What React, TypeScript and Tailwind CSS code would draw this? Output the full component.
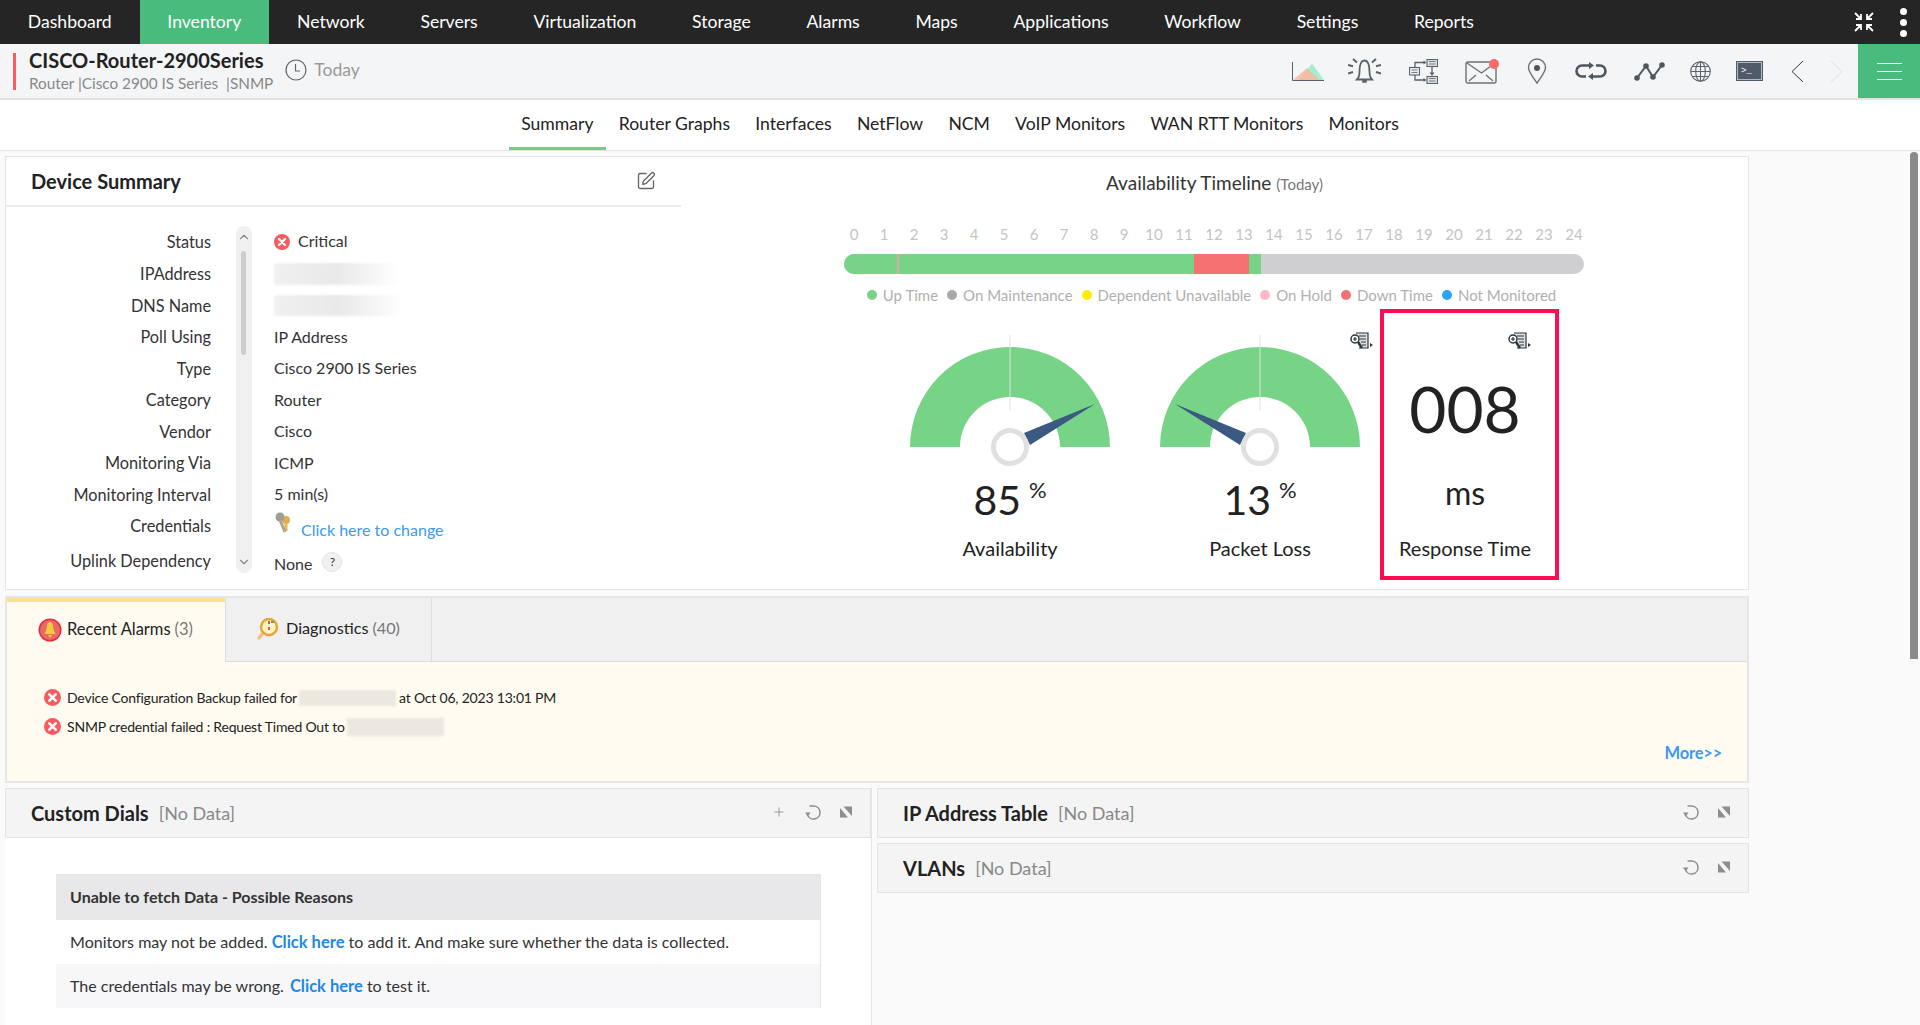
import React from 'react';
import { Plus, SquarePen, ChevronUp, ChevronDown } from 'lucide-react';

const navItems = ['Dashboard', 'Inventory', 'Network', 'Servers', 'Virtualization', 'Storage', 'Alarms', 'Maps', 'Applications', 'Workflow', 'Settings', 'Reports'];
const tabs = ['Summary', 'Router Graphs', 'Interfaces', 'NetFlow', 'NCM', 'VoIP Monitors', 'WAN RTT Monitors', 'Monitors'];
const hours = Array.from({ length: 25 }, (_, i) => i);

const legend = [
  { label: 'Up Time', dot: 'bg-[#77d385]' },
  { label: 'On Maintenance', dot: 'bg-[#aaaaaa]' },
  { label: 'Dependent Unavailable', dot: 'bg-[#ffec00]' },
  { label: 'On Hold', dot: 'bg-[#ffb9c8]' },
  { label: 'Down Time', dot: 'bg-[#f67272]' },
  { label: 'Not Monitored', dot: 'bg-[#2ba4f5]' },
];

const ErrorIcon = ({ size = 16 }: { size?: number }) => (
  <svg width={size} height={size} viewBox="0 0 16 16" className="shrink-0">
    <circle cx="8" cy="8" r="8" fill="#f65c5f" />
    <path d="M5 5l6 6M11 5l-6 6" stroke="#fff" strokeWidth="2.4" strokeLinecap="round" />
  </svg>
);

const CollapseIcon = () => (
  <svg width="12" height="12" viewBox="0 0 12 12" fill="#8b8d90">
    <path d="M0 2l8 9.500H0zM3.500 .5H12V10z" />
  </svg>
);

const RefreshIcon = () => (
  <svg width="16" height="17" viewBox="0 0 16 17" fill="none" stroke="#8b8d90" strokeWidth="1.500">
    <path d="M4.500 2H8.500a6.500 6.500 0 1 1-6 9" />
    <path d="M0 8.500h5.500L2.800 12.500z" fill="#8b8d90" stroke="none" />
  </svg>
);

const ReportIcon = () => (
  <svg width="23" height="18" viewBox="0 0 23 18" fill="none" stroke="#2c333a" strokeWidth="1.2">
    <path d="M6 1h12v15H9" fill="#dfe2e4" />
    <path d="M9 4h7M10 7h6M11 10h5M12 13h4" />
    <circle cx="5" cy="7" r="4" fill="#fff" strokeWidth="1.5" />
    <path d="M3 7h4M5 5v4" />
    <path d="M8 10l4 6" strokeWidth="2.4" />
    <path d="M20 11l3 2-3 2z" fill="#333" stroke="none" />
  </svg>
);

const Gauge = ({ value, label, needle }: { value: string; label: string; needle: string }) => (
  <div className="w-[250px] flex flex-col items-center">
    <svg width="250" height="143" viewBox="0 0 250 143" className="mt-[25px]">
      <path d="M25 113a100 100 0 0 1 200 0h-50a50 50 0 0 0-100 0z" fill="#77d385" />
      <path d="M125 1v75" stroke="#dfe3e0" strokeWidth="1" />
      <path d={needle} fill="#3b5a82" />
      <circle cx="125" cy="113" r="16.5" fill="#fff" stroke="#e0e0e0" strokeWidth="5" />
    </svg>
    <div className="-mt-[3px] h-[52px] flex items-start justify-center text-[#222]">
      <span className="text-[41px] leading-[52px]">{value}</span>
      <span className="text-[22px] leading-[20px] ml-[8px] mt-[6px]">%</span>
    </div>
    <div className="mt-[9px] text-[20px] leading-[26px] text-[#222]">{label}</div>
  </div>
);

const TopIcons = () => (
  <div className="flex items-center h-full">
    <svg width="32" height="20" viewBox="0 0 32 20">
      <path d="M7 19l13-16.500L32 19z" fill="#a4efcf" />
      <path d="M1 19L15 7l13 12z" fill="#f7b8a0" opacity=".85" />
      <path d="M.5 1v18.500H32" fill="none" stroke="#59626b" strokeWidth="1" />
    </svg>
    <svg width="33" height="27" viewBox="0 0 33 27" fill="none" stroke="#59626b" className="ml-[24px]">
      <path d="M9 21.500c2-2 2.500-4 2.500-8 0-4 .5-11 5-11s5 7 5 11c0 4 .5 6 2.500 8z" strokeWidth="1.800" />
      <path d="M15 22v2h3v-2" strokeWidth="1.500" fill="#59626b" />
      <path d="M5 1l4 3.500M28 1l-4 3.500M0 7l5 1.200M33 7l-5 1.200M0 15.500l5-1.500M33 15.500l-5-1.500" strokeWidth="2" />
    </svg>
    <svg width="29" height="25" viewBox="0 0 29 25" fill="none" stroke="#59626b" strokeWidth="1.100" className="ml-[28px]">
      <rect x="18" y=".5" width="10.500" height="7" fill="#dfe2e5" />
      <path d="M20 2.500h6.500M20 5h6.500" strokeWidth=".8" />
      <rect x="18" y="17.500" width="10.500" height="7" fill="#dfe2e5" />
      <path d="M20 19.500h6.500M20 22h6.500" strokeWidth=".8" />
      <rect x=".5" y="8.500" width="10" height="7.500" fill="#eceef0" />
      <path d="M2.500 11h6M2.500 13.500h6" strokeWidth=".8" />
      <path d="M6 8V3.500h9M6 16v5h9M23 8v6" strokeWidth="1.300" />
      <path d="M14.500 1.500l3 2-3 2zM14.500 19l3 2-3 2zM20.500 13.500h5L23 17z" fill="#59626b" stroke="none" />
    </svg>
    <div className="relative ml-[27px]">
      <svg width="33" height="25" viewBox="0 0 33 25" fill="none" stroke="#6b7278" strokeWidth="1.400">
        <rect x="1" y="3" width="30" height="21" rx="2" />
        <path d="M2 4l14.500 10L30 4M4 22l7-6M28 22l-7-6" />
      </svg>
      <span className="absolute right-[-1px] top-[0px] w-[10px] h-[10px] rounded-full bg-[#f96a6a]" />
    </div>
    <svg width="20" height="26" viewBox="0 0 20 26" fill="none" stroke="#6b7278" strokeWidth="1.400" className="ml-[29px]">
      <path d="M10 25C6 19 1.500 14 1.500 9.500a8.500 8.500 0 0 1 17 0C18.500 14 14 19 10 25z" />
      <circle cx="10" cy="10" r="3" fill="#4e565d" stroke="none" />
    </svg>
    <svg width="34" height="18" viewBox="0 0 34 18" fill="none" stroke="#4e565d" strokeWidth="2.600" className="ml-[27px]">
      <path d="M15 3.500H8a5.500 5.500 0 0 0 0 11h4M19 14.500h7a5.500 5.500 0 0 0 0-11h-4" />
      <path d="M15 0l5 3.500L15 7zM19 11l-5 3.500 5 3.500z" fill="#4e565d" stroke="none" />
    </svg>
    <svg width="31" height="19" viewBox="0 0 31 19" fill="#4e565d" stroke="#4e565d" strokeWidth="2" className="ml-[26px]">
      <path d="M3 16L12 4l7 11L28 3" fill="none" />
      <circle cx="3" cy="16" r="1.800" /><circle cx="12" cy="4" r="1.800" /><circle cx="19" cy="15" r="1.800" /><circle cx="28" cy="3" r="1.800" />
    </svg>
    <svg width="21" height="21" viewBox="0 0 21 21" fill="none" stroke="#5c646b" strokeWidth="1.100" className="ml-[25px]">
      <circle cx="10.500" cy="10.500" r="9.800" />
      <ellipse cx="10.500" cy="10.500" rx="4.800" ry="9.800" />
      <path d="M10.500 .7v19.600M.7 10.500h19.600M2 5.500h17M2 15.500h17" />
    </svg>
    <div className="ml-[25px] w-[27px] h-[20px] bg-[#4f5b6b] border border-[#4f5b6b]">
      <div className="w-full h-full border border-[#b4b9bf] flex items-center pl-[3px] text-[9px] leading-none text-white [font-family:'Liberation_Mono',monospace]">
        &gt;_
      </div>
    </div>
    <svg width="13" height="23" viewBox="0 0 13 23" fill="none" stroke="#333" strokeWidth="1" className="ml-[28px]">
      <path d="M12 1L1 11.500 12 22" />
    </svg>
    <svg width="13" height="23" viewBox="0 0 13 23" fill="none" stroke="#dcdee0" strokeWidth="1" className="ml-[26px]">
      <path d="M1 1l11 10.500L1 22" />
    </svg>
  </div>
);

const Row = ({ label, children, className = 'h-[31.5px]' }: { label: string; children: React.ReactNode; className?: string }) => (
  <div className={`flex items-center ${className}`}>
    <div className="w-[205px] pt-[1px] text-right text-[16.300px] text-[#333]">{label}</div>
    <div className="ml-[63px] flex items-center text-[16px] text-[#333]">{children}</div>
  </div>
);

const PanelHeader = ({ title, plus }: { title: string; plus?: boolean }) => (
  <div className="h-[50px] bg-[#f4f4f4] border border-[#e3e3e3] flex items-center pl-[25px] pr-[18px]">
    <span className="text-[20px] font-bold text-[#222]">{title}</span>
    <span className="ml-[10px] text-[18px] text-[#888]">[No Data]</span>
    <div className="ml-auto flex items-center gap-[19px] text-[#8b8d90] -mt-[2px]">
      {plus && <Plus size={14} strokeWidth={1.5} />}
      <RefreshIcon />
      <CollapseIcon />
    </div>
  </div>
);

export default function App() {
  return (
    <div className="h-screen overflow-hidden bg-[#fafafa] text-[#222] [font-family:Lato,sans-serif]">
      <nav className="h-[44px] bg-[#252525] flex items-center text-white">
        {navItems.map((item) => (
          <div key={item} className={`h-full flex items-center px-[27.850px] text-[17.600px] ${item === 'Inventory' ? 'bg-[#48bb7d]' : ''}`}>
            {item}
          </div>
        ))}
        <div className="ml-auto flex items-center pr-[13px] gap-[26px]">
          <svg width="20" height="20" viewBox="0 0 20 20" fill="none" stroke="#fff" strokeWidth="1.800">
            <path d="M1 1l6 6M7 2v5H2M19 1l-6 6M13 2v5h5M1 19l6-6M7 18v-5H2M19 19l-6-6M13 18v-5h5" />
          </svg>
          <div className="flex flex-col gap-[4px]">
            <span className="w-[7px] h-[7px] rounded-full bg-white" />
            <span className="w-[7px] h-[7px] rounded-full bg-white" />
            <span className="w-[7px] h-[7px] rounded-full bg-white" />
          </div>
        </div>
      </nav>

      <header className="h-[56px] bg-[#f4f5f7] border-b-2 border-[#e2e3e5] flex items-center">
        <div className="ml-[13px] w-[3px] h-[37px] bg-[#ff5a5f]" />
        <div className="ml-[13px] -mt-[2px]">
          <div className="text-[20px] leading-[26px] font-bold text-[#222]">CISCO-Router-2900Series</div>
          <div className="text-[15.300px] leading-[20px] text-[#888]">Router |Cisco 2900 IS Series &nbsp;|SNMP</div>
        </div>
        <svg width="22" height="22" viewBox="0 0 22 22" fill="none" stroke="#666" strokeWidth="1.200" className="ml-[12px] -mt-[2px]">
          <circle cx="11" cy="11" r="10" />
          <path d="M10.500 5v7H15" />
        </svg>
        <span className="ml-[7px] -mt-[2px] text-[17.500px] text-[#999]">Today</span>
        <div className="ml-auto h-full flex items-center">
          <TopIcons />
          <div className="ml-[15px] w-[62px] h-full bg-[#48bb7d] flex flex-col items-center justify-center gap-[7px]">
            <span className="w-[25px] h-px bg-white" />
            <span className="w-[25px] h-px bg-white" />
            <span className="w-[25px] h-px bg-white" />
          </div>
        </div>
      </header>

      <div className="h-[51px] bg-white border-b border-[#e5e5e5] flex justify-center">
        {tabs.map((tab) => (
          <div key={tab} className={`h-[50px] flex items-center px-[12.600px] pt-[2px] text-[17.600px] text-[#222] border-b-[3px] ${tab === 'Summary' ? 'border-[#6fcf86]' : 'border-transparent'}`}>
            {tab}
          </div>
        ))}
      </div>

      <div className="relative pl-[5px] pt-[5px] w-[1749px]">
        <section className="h-[434px] bg-white border border-[#e5e5e5] flex">
          <div className="w-[675px] shrink-0">
            <div className="h-[50px] border-b-2 border-[#ececec] flex items-center pl-[25px] pr-[25px]">
              <span className="text-[20px] font-bold text-[#222]">Device Summary</span>
              <SquarePen size={20} strokeWidth={1.6} className="ml-auto text-[#666]" />
            </div>
            <div className="relative pt-[18px]">
              <div className="absolute left-[230px] top-[19px] w-[16px] h-[347px] rounded-full bg-[#f0f0f0] flex flex-col items-center justify-between py-[4px] text-[#888]">
                <ChevronUp size={14} strokeWidth={2} />
                <ChevronDown size={14} strokeWidth={2} />
                <span className="absolute left-[5px] top-[25px] w-[5px] h-[104px] rounded-full bg-[#cdcdcd]" />
              </div>
              <Row label="Status" className="h-[33px]">
                <ErrorIcon />
                <span className="ml-[8px] -mt-[1px]">Critical</span>
              </Row>
              <Row label="IPAddress"><div className="w-[125px] h-[22px] bg-gradient-to-r from-[#f0f0f0] via-[#e9e9e9] to-white blur-[1px]" /></Row>
              <Row label="DNS Name"><div className="w-[130px] h-[21px] bg-gradient-to-r from-[#f0f0f0] via-[#e9e9e9] to-white blur-[1px]" /></Row>
              <Row label="Poll Using">IP Address</Row>
              <Row label="Type">Cisco 2900 IS Series</Row>
              <Row label="Category">Router</Row>
              <Row label="Vendor">Cisco</Row>
              <Row label="Monitoring Via">ICMP</Row>
              <Row label="Monitoring Interval">5 min(s)</Row>
              <Row label="Credentials">
                <svg width="20" height="22" viewBox="0 0 20 22" className="-mt-[6px]">
                  <circle cx="12" cy="8" r="4" fill="#e0b050" />
                  <path d="M12 11v8" stroke="#e8b84d" strokeWidth="3" />
                  <circle cx="6" cy="5" r="4.500" fill="#9d9d96" />
                  <path d="M6 8l5 12" stroke="#a9a79a" strokeWidth="3" />
                </svg>
                <span className="ml-[7px] mt-[8px] text-[#3a9bee]">Click here to change</span>
              </Row>
              <Row label="Uplink Dependency" className="h-[31.500px] mt-[3px]">
                <span className="mt-[8px]">None</span>
                <span className="ml-[10px] mt-[4px] w-[20px] h-[20px] rounded-full bg-[#f1f1f1] border border-[#e2e2e2] flex items-center justify-center text-[12px]">?</span>
              </Row>
            </div>
          </div>

          <div className="flex-1 relative">
            <div className="mt-[12px] h-[29px] flex items-baseline justify-center text-[#333]">
              <span className="text-[19px]">Availability Timeline</span>
              <span className="ml-[5px] text-[15px] text-[#777]">(Today)</span>
            </div>
            <div className="mt-[26px] ml-[163px] w-[740px] px-[10px] flex justify-between text-[15px] leading-[20px] text-[#c4c4c4]">
              {hours.map((h) => (
                <span key={h} className="w-0 flex justify-center">{h}</span>
              ))}
            </div>
            <div className="mt-[10px] ml-[163px] w-[740px] h-[20px] rounded-full overflow-hidden flex bg-[#cfcfd1]">
              <div className="w-[53px] bg-[#77d385]" />
              <div className="w-[2px] bg-[#e6a4a4]" />
              <div className="w-[295px] bg-[#77d385]" />
              <div className="w-[55px] bg-[#f67272]" />
              <div className="w-[12px] bg-[#77d385]" />
            </div>
            <div className="mt-[11px] flex justify-center gap-[9px] text-[15px] leading-[20px] text-[#b0b0b0] -translate-x-[3px]">
              {legend.map((l) => (
                <div key={l.label} className="flex items-center gap-[6px]">
                  <span className={`w-[10px] h-[10px] rounded-full ${l.dot}`} />
                  {l.label}
                </div>
              ))}
            </div>
            <div className="mt-[4px] ml-[204px] flex">
              <Gauge value="85" label="Availability" needle="M210 70L139 99L145 111z" />
              <div className="relative w-[245px]">
                <Gauge value="13" label="Packet Loss" needle="M40 70L111 99L105 111z" />
                <div className="absolute left-[215px] top-[23px]"><ReportIcon /></div>
              </div>
              <div className="relative w-[179px] h-[271px] border-4 border-[#fb0f52] pr-[9px] flex flex-col items-center text-[#222]">
                <div className="absolute right-[24px] top-[19px]"><ReportIcon /></div>
                <div className="mt-[56px] text-[64px] leading-[80px]">008</div>
                <div className="mt-[22px] text-[32px] leading-[44px]">ms</div>
                <div className="mt-[20px] text-[20px] leading-[26px]">Response Time</div>
              </div>
            </div>
          </div>
        </section>

        <section className="mt-[6px] h-[187px] bg-[#fffbf0] border-2 border-[#e6e6e4]">
          <div className="h-[64px] bg-[#f0f0f0] border-b border-[#dddddd] flex">
            <div className="w-[218px] h-[64px] bg-[#fffbf0] border-t-[4px] border-[#ffe08f] flex items-center pl-[31px] pb-[5px] text-[16.500px]">
              <svg width="24" height="24" viewBox="0 0 24 24" className="shrink-0">
                <circle cx="12" cy="12" r="11.500" fill="#ef2a3a" />
                <circle cx="12" cy="12" r="10" fill="#e56a68" />
                <path d="M12 4c-3 0-3 4-3.500 7-.3 2-1.500 3-2 5h11c-.5-2-1.700-3-2-5C15 8 15 4 12 4zM10 17h4l-2 3z" fill="#f9c83e" />
              </svg>
              <span className="ml-[5px]">Recent Alarms</span>
              <span className="ml-[4px] text-[#777]">(3)</span>
            </div>
            <div className="w-[207px] flex items-center pl-[31px] pb-[2px] text-[16.200px] border-r border-[#dddddd] border-l">
              <svg width="22" height="22" viewBox="0 0 22 22" fill="none" className="shrink-0">
                <path d="M6 15l-4 5" stroke="#f2bf85" strokeWidth="3.500" strokeLinecap="round" />
                <circle cx="12" cy="9" r="8" fill="#fff3c6" stroke="#e5a735" strokeWidth="2.500" />
                <path d="M12 3v3M12 9v3" stroke="#e25555" strokeWidth="2" />
                <path d="M14 4h3" stroke="#55b055" strokeWidth="2" />
              </svg>
              <span className="ml-[7px]">Diagnostics</span>
              <span className="ml-[4px] text-[#777]">(40)</span>
            </div>
          </div>
          <div className="relative pt-[21px] pl-[37px] text-[14px] tracking-[-0.2px] text-[#222]">
            <div className="h-[29px] flex items-center">
              <ErrorIcon size={17} />
              <span className="ml-[6px]">Device Configuration Backup failed for</span>
              <span className="ml-[2px] w-[97px] h-[16px] bg-[#ebe8df] blur-[1px]" />
              <span className="ml-[3px]">at Oct 06, 2023 13:01 PM</span>
            </div>
            <div className="h-[29px] flex items-center">
              <ErrorIcon size={17} />
              <span className="ml-[6px]">SNMP credential failed : Request Timed Out to</span>
              <span className="ml-[2px] w-[97px] h-[18px] bg-[#ebe8df] blur-[1px]" />
            </div>
            <div className="absolute right-[25px] top-[79px] text-[16.500px] font-bold text-[#3a9bee]">More&gt;&gt;</div>
          </div>
        </section>

        <div className="mt-[5px] flex items-start">
          <section className="w-[867px] h-[300px] bg-white border-r border-[#e5e5e5]">
            <PanelHeader title="Custom Dials" plus />
            <div className="mt-[36px] ml-[51px] w-[765px] border-r border-[#e5e5e5] text-[16.050px] text-[#333]">
              <div className="h-[46px] bg-[#e8e8ea] flex items-center pl-[14px] font-bold">Unable to fetch Data - Possible Reasons</div>
              <div className="h-[44px] bg-white flex items-center pl-[14px]">
                Monitors may not be added.&nbsp;
                <span className="font-bold text-[16.500px] text-[#1e88e5]">Click here</span>
                &nbsp;to add it. And make sure whether the data is collected.
              </div>
              <div className="h-[44px] bg-[#f7f7f9] flex items-center pl-[14px]">
                The credentials may be wrong.&nbsp;
                <span className="ml-[2px] font-bold text-[16.500px] text-[#1e88e5]">Click here</span>
                &nbsp;to test it.
              </div>
            </div>
          </section>
          <div className="ml-[5px] flex-1 flex flex-col gap-[5px]">
            <PanelHeader title="IP Address Table" />
            <PanelHeader title="VLANs" />
          </div>
        </div>
      </div>

      <div className="fixed right-[2px] top-[152px] w-[8px] h-[507px] rounded-t-full bg-[#8a8a8a]" />
    </div>
  );
}
